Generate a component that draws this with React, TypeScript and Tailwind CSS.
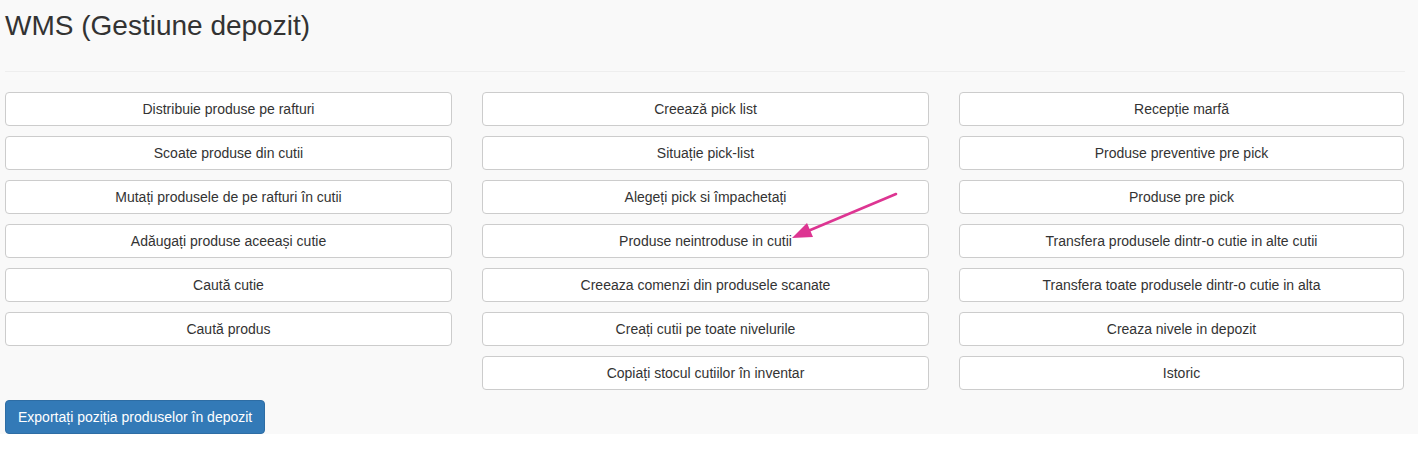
import React from "react";

const col1 = [
  "Distribuie produse pe rafturi",
  "Scoate produse din cutii",
  "Mutați produsele de pe rafturi în cutii",
  "Adăugați produse aceeași cutie",
  "Caută cutie",
  "Caută produs",
];
const col2 = [
  "Creează pick list",
  "Situație pick-list",
  "Alegeți pick si împachetați",
  "Produse neintroduse in cutii",
  "Creeaza comenzi din produsele scanate",
  "Creați cutii pe toate nivelurile",
  "Copiați stocul cutiilor în inventar",
];
const col3 = [
  "Recepție marfă",
  "Produse preventive pre pick",
  "Produse pre pick",
  "Transfera produsele dintr-o cutie in alte cutii",
  "Transfera toate produsele dintr-o cutie in alta",
  "Creaza nivele in depozit",
  "Istoric",
];

function Btn({ label }: { label: string }) {
  return (
    <button className="mb-[10px] block h-[34px] w-full rounded-[4px] border border-[#cccccc] bg-white px-3 text-center text-[14px] leading-[20px] text-[#333333]">
      {label}
    </button>
  );
}

function Col({ items }: { items: string[] }) {
  return (
    <div className="flex flex-col">
      {items.map((l) => (
        <Btn key={l} label={l} />
      ))}
    </div>
  );
}

export default function App() {
  return (
    <div
      className="relative bg-[#f9f9f9] pl-[5px] pr-[13px]"
      style={{ fontFamily: '"Liberation Sans", Arial, Helvetica, sans-serif' }}
    >
      <h2 className="pt-[10px] text-[28px] font-normal leading-[31px] text-[#333333]">
        WMS (Gestiune depozit)
      </h2>
      <hr className="mb-[20px] mt-[30px] border-0 border-t border-[#eeeeee]" />
      <div className="grid grid-cols-[447px_447px_445px] gap-x-[30px]">
        <Col items={col1} />
        <Col items={col2} />
        <Col items={col3} />
      </div>
      <button className="block h-[34px] rounded-[4px] border border-[#2e6da4] bg-[#337ab7] px-3 text-[14px] leading-[20px] text-white">
        Exportați poziția produselor în depozit
      </button>
      <svg
        className="pointer-events-none absolute left-[780px] top-[185px]"
        width="125"
        height="60"
        viewBox="0 0 125 60"
      >
        <line x1="116" y1="9" x2="28" y2="46" stroke="#dd3592" strokeWidth="2.6" strokeLinecap="round" />
        <polygon points="12,53 33,52 27,38" fill="#dd3592" />
      </svg>
    </div>
  );
}
